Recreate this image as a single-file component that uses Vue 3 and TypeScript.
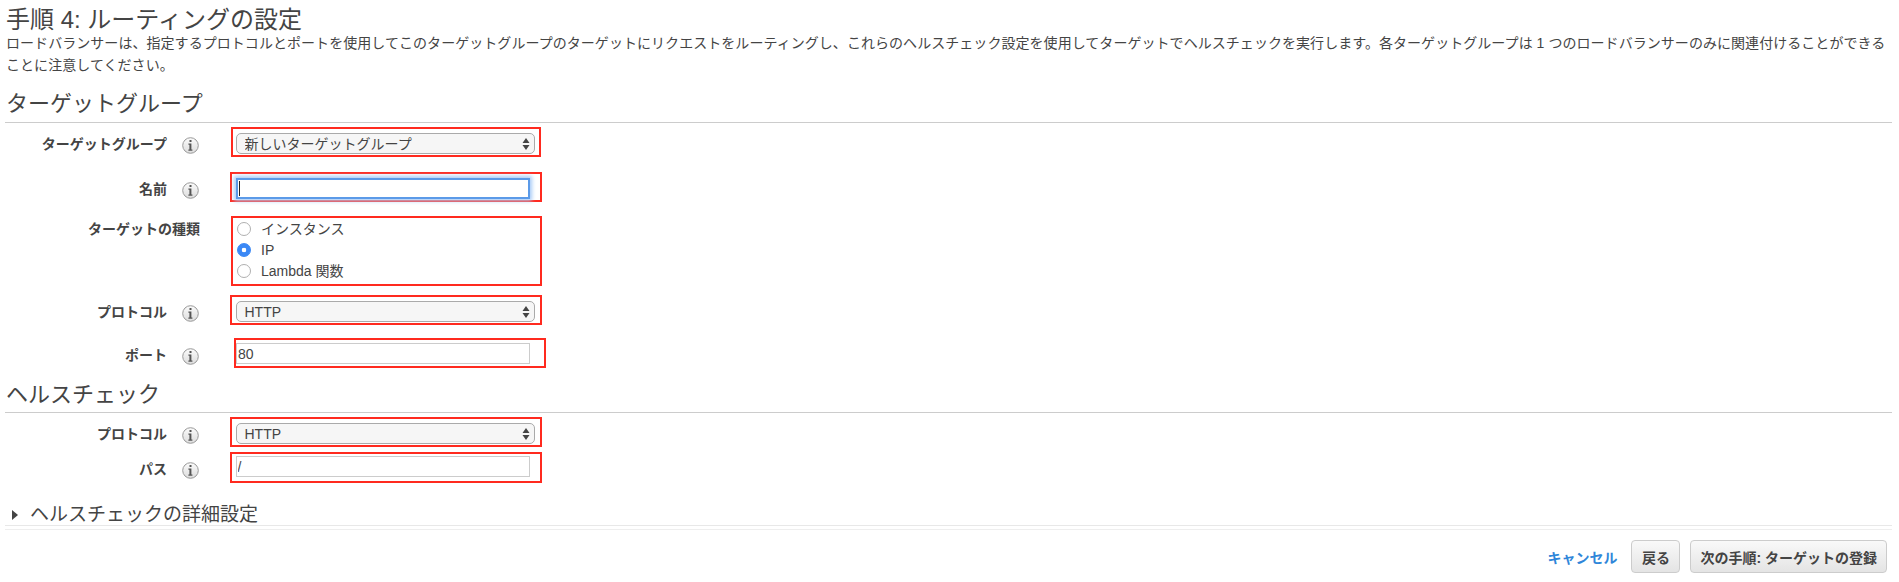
<script setup lang="ts">
const intro =
  'ロードバランサーは、指定するプロトコルとポートを使用してこのターゲットグループのターゲットにリクエストをルーティングし、これらのヘルスチェック設定を使用してターゲットでヘルスチェックを実行します。各ターゲットグループは 1 つのロードバランサーのみに関連付けることができることに注意してください。'
const targetTypes = [
  { label: 'インスタンス', checked: false },
  { label: 'IP', checked: true },
  { label: 'Lambda 関数', checked: false },
]
</script>

<template>
  <div class="page">
    <h1>手順 4: ルーティングの設定</h1>
    <p class="intro">{{ intro }}</p>

    <h2 class="section">ターゲットグループ</h2>

    <div class="row r1">
      <label class="label">ターゲットグループ</label>
      <svg class="info" viewBox="0 0 17 17" width="17" height="17"><defs><linearGradient id="ig" x1="0" y1="0" x2="0" y2="1"><stop offset="0" stop-color="#fbfbfb" /><stop offset="1" stop-color="#dcdcdc" /></linearGradient></defs><circle cx="8.5" cy="8.5" r="7.8" fill="url(#ig)" stroke="#999" /><path d="M7.5 3.1h2v2h-2zM6.4 6.5h3v6h1v1.2h-4v-1.2h1V7.7h-1z" fill="#555" /></svg>
      <div class="box bx231">
        <div class="select-wrap">
          <select class="select"><option>新しいターゲットグループ</option></select>
          <svg class="arrows" viewBox="0 0 8 12" width="8" height="12"><path d="M4 0l3.5 5h-7zM4 12L.5 7h7z" fill="#444" /></svg>
        </div>
      </div>
    </div>

    <div class="row r2">
      <label class="label">名前</label>
      <svg class="info" viewBox="0 0 17 17" width="17" height="17"><circle cx="8.5" cy="8.5" r="7.8" fill="url(#ig)" stroke="#999" /><path d="M7.5 3.1h2v2h-2zM6.4 6.5h3v6h1v1.2h-4v-1.2h1V7.7h-1z" fill="#555" /></svg>
      <div class="box bx230">
        <div class="focus-wrap">
          <input class="input focused" type="text" />
          <span class="caret"></span>
        </div>
      </div>
    </div>

    <div class="row r3">
      <label class="label label-wide">ターゲットの種類</label>
      <div class="box box-radio">
        <label v-for="t in targetTypes" :key="t.label" class="radio-row">
          <input class="radio" type="radio" name="type" :checked="t.checked" />
          <span>{{ t.label }}</span>
        </label>
      </div>
    </div>

    <div class="row r4">
      <label class="label">プロトコル</label>
      <svg class="info" viewBox="0 0 17 17" width="17" height="17"><circle cx="8.5" cy="8.5" r="7.8" fill="url(#ig)" stroke="#999" /><path d="M7.5 3.1h2v2h-2zM6.4 6.5h3v6h1v1.2h-4v-1.2h1V7.7h-1z" fill="#555" /></svg>
      <div class="box bx230">
        <div class="select-wrap">
          <select class="select"><option>HTTP</option></select>
          <svg class="arrows" viewBox="0 0 8 12" width="8" height="12"><path d="M4 0l3.5 5h-7zM4 12L.5 7h7z" fill="#444" /></svg>
        </div>
      </div>
    </div>

    <div class="row r5">
      <label class="label">ポート</label>
      <svg class="info" viewBox="0 0 17 17" width="17" height="17"><circle cx="8.5" cy="8.5" r="7.8" fill="url(#ig)" stroke="#999" /><path d="M7.5 3.1h2v2h-2zM6.4 6.5h3v6h1v1.2h-4v-1.2h1V7.7h-1z" fill="#555" /></svg>
      <div class="box bx234">
        <input class="input" type="text" value="80" />
      </div>
    </div>

    <h2 class="section s2">ヘルスチェック</h2>

    <div class="row r6">
      <label class="label">プロトコル</label>
      <svg class="info" viewBox="0 0 17 17" width="17" height="17"><circle cx="8.5" cy="8.5" r="7.8" fill="url(#ig)" stroke="#999" /><path d="M7.5 3.1h2v2h-2zM6.4 6.5h3v6h1v1.2h-4v-1.2h1V7.7h-1z" fill="#555" /></svg>
      <div class="box bx230">
        <div class="select-wrap">
          <select class="select"><option>HTTP</option></select>
          <svg class="arrows" viewBox="0 0 8 12" width="8" height="12"><path d="M4 0l3.5 5h-7zM4 12L.5 7h7z" fill="#444" /></svg>
        </div>
      </div>
    </div>

    <div class="row r7">
      <label class="label">パス</label>
      <svg class="info" viewBox="0 0 17 17" width="17" height="17"><circle cx="8.5" cy="8.5" r="7.8" fill="url(#ig)" stroke="#999" /><path d="M7.5 3.1h2v2h-2zM6.4 6.5h3v6h1v1.2h-4v-1.2h1V7.7h-1z" fill="#555" /></svg>
      <div class="box bx230 box-tight">
        <input class="input" type="text" value="/" />
      </div>
    </div>

    <div class="details">
      <svg class="tri" viewBox="0 0 6 10" width="6" height="10"><path d="M0 0l6 5-6 5z" fill="#444" /></svg>
      <span>ヘルスチェックの詳細設定</span>
    </div>
    <div class="rule"></div>

    <div class="footer">
      <a class="cancel">キャンセル</a>
      <button class="btn btn-back" type="button">戻る</button>
      <button class="btn" type="button">次の手順: ターゲットの登録</button>
    </div>
  </div>
</template>

<style>
html, body { margin: 0; background: #fff; }
</style>

<style scoped>
.page {
  width: 1899px;
  height: 582px;
  box-sizing: border-box;
  overflow: hidden;
  padding: 0 7px 0 5px;
  font-family: "Liberation Sans", "Noto Sans CJK JP", sans-serif;
  font-size: 14px;
  color: #444;
}
h1 {
  margin: 8px 0 0;
  padding-left: 1px;
  font-size: 24px;
  line-height: 24px;
  font-weight: 400;
  color: #444;
}
.intro {
  margin: 0;
  padding-left: 1px;
  font-size: 14px;
  line-height: 22px;
  letter-spacing: 0.05px;
  color: #444;
}
.section {
  margin: 16px 0 0;
  padding: 0 0 6px 1px;
  font-size: 22px;
  line-height: 24px;
  font-weight: 400;
  color: #444;
  border-bottom: 1px solid #ccc;
}
.s2 { margin-top: 15px; padding-bottom: 5px; }
.row { display: flex; align-items: flex-start; }
.r1 { margin-top: 4px; }
.r2 { margin-top: 15px; }
.r3 { margin-top: 14px; }
.r4 { margin-top: 9px; }
.r5 { margin-top: 13px; }
.r6 { margin-top: 4px; }
.r7 { margin-top: 5px; }
.label {
  width: 162px;
  flex: none;
  text-align: right;
  font-weight: 700;
  line-height: 20px;
  margin-top: 7px;
  color: #444;
}
.label-wide { width: 195px; margin-top: 3px; }
.info { flex: none; margin: 10px 0 0 15px; }
.box {
  box-sizing: border-box;
  flex: none;
  height: 30px;
  border: 2px solid #ff2a1f;
  padding: 4px 0 0;
}
.bx231 { width: 310px; margin-left: 32px; padding-left: 2.5px; }
.bx230 { width: 312px; margin-left: 30.5px; padding-left: 4px; }
.bx234 { width: 312px; margin-left: 35px; padding: 3px 0 0 0; }
.box-tight { height: 31px; padding-top: 2px; }
.box-radio {
  width: 311.5px;
  height: 70px;
  margin-left: 30.5px;
  padding: 0.5px 0 0 4.5px;
}
.select-wrap { position: relative; width: 299px; height: 21px; }
.select {
  appearance: none;
  display: block;
  box-sizing: border-box;
  width: 100%;
  height: 100%;
  margin: 0;
  padding: 0 20px 0 8px;
  border: 1px solid #aaa;
  border-radius: 5px;
  background: #f6f6f6;
  font: inherit;
  font-size: 14px;
  color: #444;
}
.arrows { position: absolute; right: 5px; top: 5px; pointer-events: none; }
.input {
  display: block;
  box-sizing: border-box;
  width: 294px;
  height: 21px;
  margin: 0;
  padding: 0 1px;
  border: 1px solid #ccc;
  border-radius: 0;
  background: #fff;
  font: inherit;
  font-size: 14px;
  color: #444;
  outline: none;
}
.focus-wrap { position: relative; width: 294px; }
.focused {
  border: 2px solid #5b9ae8;
  box-shadow: 0 0 4px 2px #a8cbf7;
}
.caret {
  position: absolute;
  left: 3px;
  top: 3px;
  width: 1px;
  height: 15px;
  background: #222;
}
.radio-row {
  display: flex;
  align-items: center;
  gap: 10px;
  height: 21px;
  line-height: 21px;
}
.radio {
  appearance: none;
  flex: none;
  box-sizing: border-box;
  width: 14px;
  height: 14px;
  margin: 0;
  border: 1px solid #b0b0b0;
  border-radius: 50%;
  background: #fff;
}
.radio:checked {
  border-color: #3b88f5;
  background: radial-gradient(circle, #fff 0 2px, #3b88f5 2.6px);
}
.details {
  display: flex;
  align-items: center;
  box-sizing: content-box;
  height: 21px;
  margin-top: 19px;
  padding: 2px 0 0 7px;
  border-bottom: 1px solid #e8e8e8;
  font-size: 19px;
  line-height: 21px;
  color: #444;
}
.tri { flex: none; margin-right: 12px; }
.rule { height: 0; margin-top: 3px; border-top: 1px solid #eee; }
.footer {
  display: flex;
  justify-content: flex-end;
  align-items: center;
  gap: 10px;
  margin-top: 10px;
  padding-right: 5px;
}
.cancel {
  margin-right: 4px;
  color: #2f86d9;
  font-weight: 700;
  cursor: pointer;
}
.btn {
  box-sizing: border-box;
  height: 33px;
  padding: 0 9px;
  border: 1px solid #ccc;
  border-radius: 4px;
  background: linear-gradient(#f9f9f9, #e4e4e4);
  font: inherit;
  font-weight: 700;
  color: #444;
}
.btn-back { padding: 0 9.5px; }
</style>
